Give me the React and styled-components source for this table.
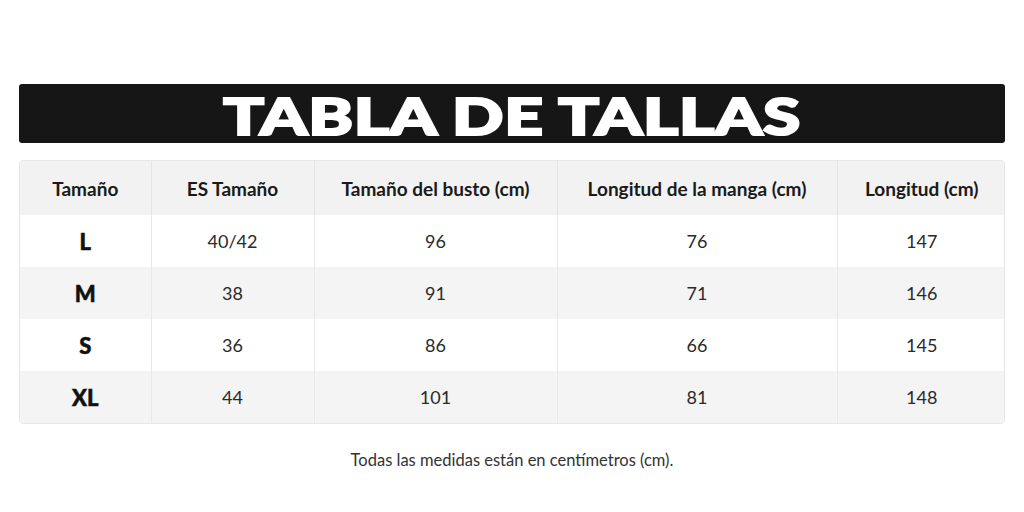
import styled, { createGlobalStyle } from 'styled-components';

const GlobalStyle = createGlobalStyle`
  html, body {
    margin: 0;
    padding: 0;
    background: #ffffff;
    font-family: 'Lato', 'Noto Sans', sans-serif;
  }
`;

const sizes = [
  { size: 'L', es: '40/42', bust: '96', sleeve: '76', length: '147' },
  { size: 'M', es: '38', bust: '91', sleeve: '71', length: '146' },
  { size: 'S', es: '36', bust: '86', sleeve: '66', length: '145' },
  { size: 'XL', es: '44', bust: '101', sleeve: '81', length: '148' },
];

const columns = [
  { label: 'Tamaño', width: 131 },
  { label: 'ES Tamaño', width: 163 },
  { label: 'Tamaño del busto (cm)', width: 243 },
  { label: 'Longitud de la manga (cm)', width: 280 },
  { label: 'Longitud (cm)', width: 169 },
];

const App = () => (
  <>
    <GlobalStyle />
    <Page>
      <Banner>
        <Title>TABLA DE TALLAS</Title>
      </Banner>

      <TableWrap>
        <Table>
          <colgroup>
            {columns.map((c) => (
              <col key={c.label} style={{ width: c.width }} />
            ))}
          </colgroup>
          <thead>
            <tr>
              {columns.map((c) => (
                <Th key={c.label}>{c.label}</Th>
              ))}
            </tr>
          </thead>
          <tbody>
            {sizes.map((row, i) => (
              <Row key={row.size} $alt={i % 2 === 1}>
                <SizeCell>{row.size}</SizeCell>
                <Td>{row.es}</Td>
                <Td>{row.bust}</Td>
                <Td>{row.sleeve}</Td>
                <Td>{row.length}</Td>
              </Row>
            ))}
          </tbody>
        </Table>
      </TableWrap>

      <Note>Todas las medidas están en centímetros (cm).</Note>
    </Page>
  </>
);

const Page = styled.div`
  width: 1024px;
  height: 512px;
  box-sizing: border-box;
  padding: 84px 19px 0 19px;
  display: flex;
  flex-direction: column;
`;

const Banner = styled.div`
  height: 59px;
  background: #161616;
  border-radius: 3px;
  display: flex;
  align-items: center;
  justify-content: center;
`;

const Title = styled.h1`
  margin: 0;
  color: #ffffff;
  font-family: 'Lato', sans-serif;
  font-weight: 900;
  font-size: 52px;
  line-height: 1;
  letter-spacing: 0.5px;
  transform: scaleX(1.3);
  -webkit-text-stroke: 2.2px #ffffff;
  padding-top: 3px;
`;

const TableWrap = styled.div`
  margin-top: 17px;
  border: 1px solid #e6e6e6;
  border-radius: 4px;
  overflow: hidden;
`;

const Table = styled.table`
  width: 100%;
  border-collapse: collapse;
  table-layout: fixed;
`;

const Th = styled.th`
  height: 54px;
  padding: 0;
  background: #f2f2f2;
  color: #1a1a1a;
  font-size: 19px;
  font-weight: 700;
  text-align: center;
  border-left: 1px solid #e4e4e4;

  &:first-child {
    border-left: none;
  }
`;

const Row = styled.tr`
  height: 52px;
  background: ${(p) => (p.$alt ? '#f4f4f4' : '#ffffff')};
`;

const Td = styled.td`
  padding: 0;
  text-align: center;
  color: #2a2a2a;
  font-size: 18px;
  font-weight: 400;
  border-left: 1px solid #e8e8e8;
`;

const SizeCell = styled(Td)`
  border-left: none;
  color: #111111;
  font-size: 22px;
  font-weight: 900;
  -webkit-text-stroke: 0.5px #111111;
`;

const Note = styled.p`
  margin: 26px 0 0;
  text-align: center;
  color: #333333;
  font-size: 16.5px;
`;

export default App;
